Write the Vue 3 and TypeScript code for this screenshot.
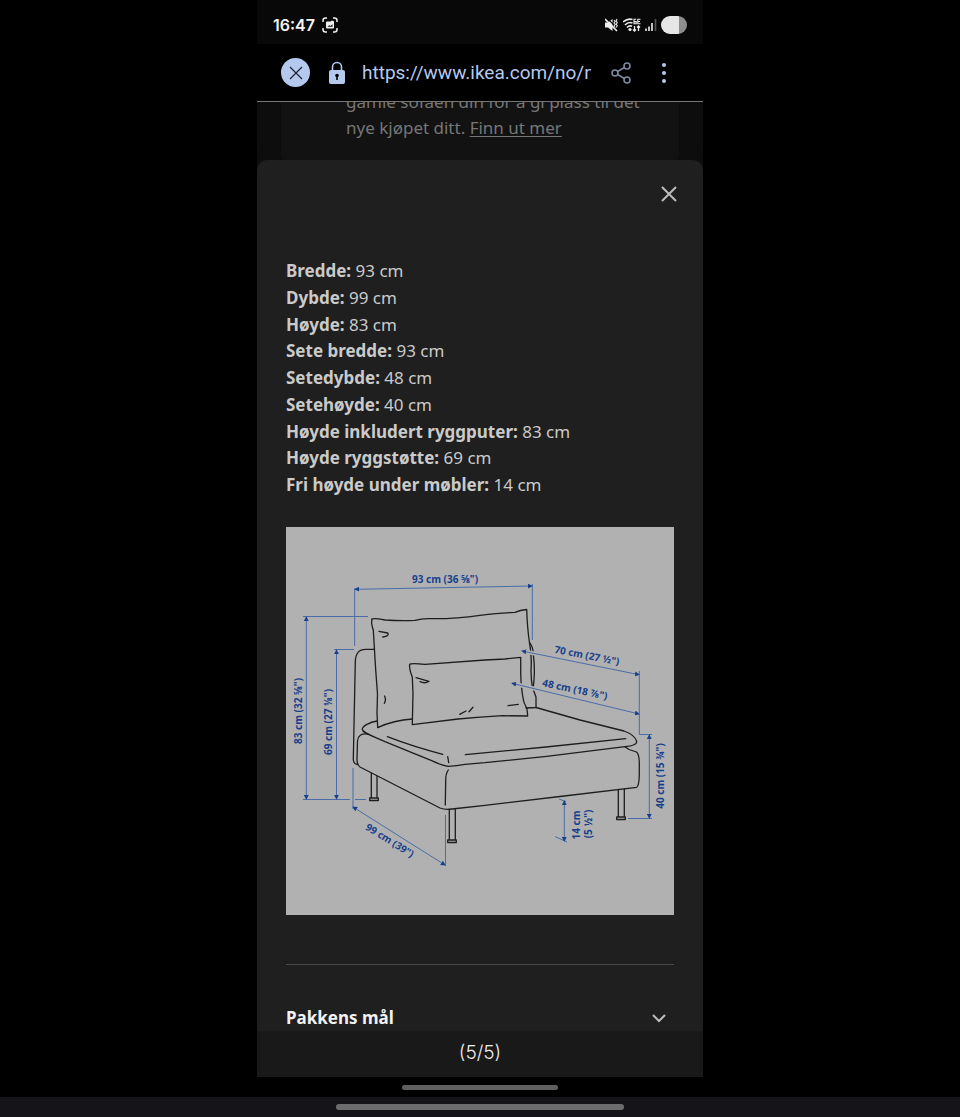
<script setup lang="ts">
import { ref } from 'vue'

interface Measure {
  label: string
  value: string
}

interface DimensionLabel {
  text: string
  x: number
  y: number
  angle: number
}

const address = ref('https://www.ikea.com/no/no/p/')

const measures: Measure[] = [
  { label: 'Bredde:', value: '93 cm' },
  { label: 'Dybde:', value: '99 cm' },
  { label: 'Høyde:', value: '83 cm' },
  { label: 'Sete bredde:', value: '93 cm' },
  { label: 'Setedybde:', value: '48 cm' },
  { label: 'Setehøyde:', value: '40 cm' },
  { label: 'Høyde inkludert ryggputer:', value: '83 cm' },
  { label: 'Høyde ryggstøtte:', value: '69 cm' },
  { label: 'Fri høyde under møbler:', value: '14 cm' },
]

const dimensionLabels: DimensionLabel[] = [
  { text: '93 cm (36 ⅝")', x: 445, y: 579, angle: 0 },
  { text: '83 cm (32 ⅝")', x: 298, y: 711, angle: -90 },
  { text: '69 cm (27 ⅛")', x: 328, y: 722, angle: -90 },
  { text: '70 cm (27 ½")', x: 587, y: 655, angle: 11 },
  { text: '48 cm (18 ⅞")', x: 575, y: 689, angle: 12 },
  { text: '99 cm (39")', x: 390, y: 840, angle: 32 },
  { text: '40 cm (15 ¾")', x: 660, y: 776, angle: -90 },
  { text: '14 cm', x: 576, y: 825, angle: -90 },
  { text: '(5 ½")', x: 588, y: 824, angle: -90 },
]

const dimensionLines: string[] = [
  'M355 589.300L532 586',
  'M306.300 617V799',
  'M336.500 650V799',
  'M353 807L445 865',
  'M522 651L639 674.700',
  'M512 683.300L639 714',
  'M649.300 735V818',
  'M564.300 801V841',
]
</script>

<template>
  <div class="screen">
    <main class="phone">
      <header class="status">
        <span class="time">16:47</span>
        <svg class="capture" viewBox="0 0 16 16" width="16" height="16" aria-hidden="true">
          <path d="M1 5V3.500Q1 1 3.500 1H5M11 1h1.500Q15 1 15 3.500V5M15 11v1.500Q15 15 12.500 15H11M5 15H3.500Q1 15 1 12.500V11" fill="none" stroke="#eee" stroke-width="1.500" />
          <path d="M4 5.500Q4 4.500 5 4.500H8.500L9.500 3.800H11Q12 3.800 12 5V10.500Q12 11.500 11 11.500H5Q4 11.500 4 10.500z" fill="#eee" />
          <path d="M5.500 9.800l1.800-1.600 1.200.8 2-1.800v2.600z" fill="#080808" />
        </svg>
        <div class="indicators">
          <svg viewBox="0 0 14 14" width="14" height="14" aria-hidden="true">
            <path d="M0 4.500h3L7.500 1v12L3 9.500H0z" fill="#eee" />
            <path d="M2 0l12 12" stroke="#080808" stroke-width="1.200" />
            <path d="M0 1l12 12" stroke="#eee" stroke-width="1.600" />
            <path d="M9 2l1.200 1.500L9 5l1.200 1.500L9 8l1.200 1.500M12 1l-.8 1.700 1 1.700-1 1.700 1 1.700-1 1.700" fill="none" stroke="#ddd" stroke-width="1.200" />
          </svg>
          <svg viewBox="0 0 18 14" width="18" height="14" aria-hidden="true">
            <path d="M0 4Q4.500 0 9.500 1.500M2 7Q5.500 3.500 9.500 5M4 9.500Q6.500 7 9 8.300" fill="none" stroke="#eee" stroke-width="1.600" />
            <circle cx="7" cy="11.500" r="1.600" fill="#eee" />
            <path d="M13.200 1.300h-2.200v4.500h2.200v-2.200h-2M17.500 1.300h-2.700v4.500h2.700M14.800 3.500h2.200" fill="none" stroke="#eee" stroke-width="1.100" />
            <path d="M11.500 8v5M10 11.500l1.500 1.500 1.500-1.500M15.500 13V8M14 9.500L15.500 8 17 9.500" fill="none" stroke="#eee" stroke-width="1.300" />
          </svg>
          <svg viewBox="0 0 12 12" width="12" height="12" aria-hidden="true">
            <path d="M1 9.500V12M4 7.500V12M7 4V12" stroke="#eee" stroke-width="1.600" />
            <path d="M10.500 0V12" stroke="#555" stroke-width="1.600" />
          </svg>
          <span class="battery"></span>
        </div>
      </header>

      <nav class="toolbar" aria-label="Nettleser">
        <button class="stop" type="button" aria-label="Stopp">
          <svg viewBox="0 0 14 14" width="14" height="14"><path d="M1 1l12 12M13 1L1 13" stroke="#1c2433" stroke-width="1.200" /></svg>
        </button>
        <button class="lock" type="button" aria-label="Sikker tilkobling">
          <svg viewBox="0 0 18 24" width="18" height="24">
            <path d="M4.500 10V6a4.500 4.500 0 0 1 9 0v4" fill="none" stroke="#b5c9ef" stroke-width="1.600" />
            <rect x="1" y="9" width="16" height="14" rx="2" fill="#b5c9ef" />
            <circle cx="9" cy="14.500" r="1.800" fill="#000" />
            <path d="M9 15v4" stroke="#000" stroke-width="1.600" />
          </svg>
        </button>
        <input v-model="address" class="address" type="text" aria-label="Adresse" />
        <button class="share" type="button" aria-label="Del">
          <svg viewBox="0 0 20 22" width="20" height="22">
            <g fill="none" stroke="#7d879e" stroke-width="1.600">
              <circle cx="4" cy="11" r="3" />
              <circle cx="16" cy="4" r="3" />
              <circle cx="16" cy="18" r="3" />
              <path d="M6.600 9.500l6.800-4M6.600 12.500l6.800 4" />
            </g>
          </svg>
        </button>
        <button class="more" type="button" aria-label="Mer">
          <svg viewBox="0 0 4 20" width="4" height="20" fill="#b5c9ef">
            <circle cx="2" cy="2" r="2" /><circle cx="2" cy="10" r="2" /><circle cx="2" cy="18" r="2" />
          </svg>
        </button>
      </nav>

      <section class="backdrop">
        <div class="card">
          <p>gamle sofaen din for å gi plass til det<br />nye kjøpet ditt. <a href="#">Finn ut mer</a></p>
        </div>
      </section>

      <section class="sheet" role="dialog" aria-label="Mål">
        <div class="sheet-head">
          <button type="button" aria-label="Lukk">
            <svg viewBox="0 0 16 16" width="16" height="16"><path d="M1 1l14 14M15 1L1 15" stroke="#bdbdbd" stroke-width="2" /></svg>
          </button>
        </div>

        <dl class="measures">
          <div v-for="m in measures" :key="m.label">
            <dt>{{ m.label }}</dt>
            {{ ' ' }}
            <dd>{{ m.value }}</dd>
          </div>
        </dl>

        <svg class="drawing" viewBox="286 527 388 388" role="img" aria-label="Måltegning">
          <defs>
            <marker id="arrow" viewBox="0 0 6 6" refX="5" refY="3" markerWidth="5" markerHeight="5" markerUnits="userSpaceOnUse" orient="auto-start-reverse">
              <path d="M0 0L6 3L0 6z" fill="#17418c" />
            </marker>
          </defs>

          <g class="ink">
            <path d="M374 649.300H366Q355.500 649 355.300 662L353.300 759Q353.200 764 357.500 764.500" />
            <path d="M372 619C370.500 624 372 626 373.300 630L374.300 647L375.700 670L377.500 694L377 713L377.700 727.700Q394 720 412.300 719" />
            <path d="M372 619Q374 618 385 620Q402 621 415 620.300Q423 618 432 618.700Q455 619 480 615.300Q500 613 515 612.300Q520 610 526.700 609.500Q527.300 628 529.500 643Q532 655 531 670Q531 680 532.500 688" />
            <path d="M530 643Q533.500 648 533.500 656Q535.500 672 533 689L536 697V707.500L526 708" />
            <path d="M379 631.300L387.700 633Q390 636 382.700 637M384.500 696Q386.500 700 384.300 703.300" />
            <path d="M409.700 664.300Q411 663 425 664.300L485 660L505 659L520.700 657.300V673Q520.700 685 522.500 695Q523 702 527 709L527.700 716L503 715.700Q480 717 458 719L412.300 724.700L413 693L412.300 677Q409 669 409.700 664.300" />
            <path d="M416 677.700L429 681.300Q425 684 420 681.700M459.700 714.300L466 711M469 711.700L473 707.300M508 705.700L518.300 704.300" />
            <path d="M377 721C370 722 362 726 362.300 729.500C363 733 370 735 385 741.700Q410 752 431.700 760.700Q443 766 448.300 766.300Q457 766 465 764.300L485 762.700L546.700 756.300L625 746.700Q637 745.500 636.700 741.500Q635 735 624 731L580 720L536 707.500" />
            <path d="M387.300 736.700Q414 747 442.700 754.300M465.300 754.700L546 747L625.700 738.700M447.700 756.700L448.700 762.700" />
            <path d="M367.700 734Q358 733 357.500 741L357 759Q357 765 360 767L440 808Q445 810 452 809L485 805.300L560 796.500L636.700 787.300Q639 786 639.300 775V762Q639 754 636.500 752L629 749.500L625 746.700" />
            <path d="M448.300 770Q445.500 774 445.700 780L445.300 805" />
            <path d="M371.300 773.500V798M377 776.500V798M369.700 798H378.300V800.500H369.700z" />
            <path d="M449.300 809.500V840M455.300 809V840M447.700 840H456.300V842.500H447.700z" />
            <path d="M618.300 789.500V817M624.300 789V817M616.700 817H625.300V819.500H616.700z" />
          </g>

          <path class="gap" d="M522 651L639 674.700M512 683.300L639 714" />

          <g class="guide">
            <path d="M354.700 588V646M532.300 584V640M303 616.500H368M303 799.500H350M355 799.500H366M334 649.500H354M353 768V809M445.500 815V866M639.300 671V734.500H652M628 818.500H652M559 799L566 801.500M555 836.500L567 842" />
            <path v-for="line in dimensionLines" :key="line" :d="line" marker-start="url(#arrow)" marker-end="url(#arrow)" />
          </g>

          <text
            v-for="d in dimensionLabels"
            :key="d.text"
            class="dimension"
            :transform="`translate(${d.x} ${d.y}) rotate(${d.angle})`"
            dy="4"
          >{{ d.text }}</text>
        </svg>

        <hr />

        <button class="accordion" type="button" aria-expanded="false">
          <span>Pakkens mål</span>
          <svg viewBox="0 0 14 9" width="14" height="9" aria-hidden="true"><path d="M1 1l6 6 6-6" fill="none" stroke="#bdbdbd" stroke-width="2" /></svg>
        </button>
      </section>

      <footer class="counter">(5/5)</footer>
      <div class="inner-handle"><span></span></div>
    </main>
    <div class="outer-handle"><span></span></div>
  </div>
</template>

<style>
body {
  margin: 0;
  background: #000;
}
</style>

<style scoped>
.screen {
  display: flex;
  flex-direction: column;
  min-height: 100vh;
  background: #000;
  font-family: "Noto Sans", sans-serif;
  font-size: 17px;
  line-height: 26px;
}

button {
  display: flex;
  align-items: center;
  justify-content: center;
  padding: 0;
  border: 0;
  background: none;
  color: inherit;
  font: inherit;
}

svg {
  display: block;
  flex: none;
}

.phone {
  width: 100%;
  max-width: 446px;
  margin: 0 auto;
}

.status {
  display: flex;
  align-items: center;
  gap: 7px;
  height: 44px;
  padding: 5px 16px 0;
  box-sizing: border-box;
  background: #080808;
  color: #f4f4f4;
}

.time {
  font: 600 16px/24px Inter, sans-serif;
}

.indicators {
  display: flex;
  align-items: center;
  gap: 4px;
  margin-left: auto;
}

.battery {
  width: 26px;
  height: 18px;
  border-radius: 9px;
  background: linear-gradient(to right, #e6e6e6 70%, #8d8d8d 70%);
}

.toolbar {
  display: flex;
  align-items: center;
  height: 57px;
  padding: 0 37px 0 24px;
  border-bottom: 1px solid #777;
  background: #000;
}

.stop {
  flex: none;
  width: 29px;
  height: 29px;
  border-radius: 50%;
  background: #b5c9ef;
}

.lock {
  margin: 0 16px 0 18px;
}

.address {
  flex: 1;
  min-width: 0;
  padding: 0;
  border: 0;
  outline: 0;
  background: none;
  color: #b5c9ef;
  font: 400 19px/28px Roboto, sans-serif;
}

.share {
  margin: 0 31px 0 20px;
}

.backdrop {
  display: flex;
  align-items: flex-end;
  height: 58px;
  padding: 0 24px;
  overflow: hidden;
  background: #0d0d0d;
}

.card {
  flex: 1;
  padding: 0 24px 19px 65px;
  border-radius: 0 0 6px 6px;
  background: #121212;
  color: #767676;
}

.card p {
  margin: 0;
  white-space: nowrap;
}

.card a {
  color: inherit;
  text-underline-offset: 2px;
}

.sheet {
  padding: 0 29px;
  border-radius: 10px 10px 0 0;
  background: #1f1f1f;
  box-shadow: 0 -10px 0 #0d0d0d;
  color: #cacaca;
}

.sheet-head {
  display: flex;
  justify-content: flex-end;
  padding: 22px 0 52px;
}

.sheet-head button {
  width: 24px;
  height: 24px;
  margin-right: -7px;
}

.measures {
  display: grid;
  align-content: space-between;
  min-height: 240px;
  margin: 0;
}

.measures dt,
.measures dd {
  display: inline;
  margin: 0;
}

.measures dt {
  font-weight: 700;
}

.drawing {
  width: 100%;
  height: auto;
  margin-top: 29px;
  background: #b1b1b1;
}

.ink {
  fill: none;
  stroke: #1d1d1d;
  stroke-width: 1.3;
  stroke-linejoin: round;
  stroke-linecap: round;
}

.gap {
  fill: none;
  stroke: #b1b1b1;
  stroke-width: 4;
}

.guide {
  fill: none;
  stroke: #4a6da8;
  stroke-width: 1;
}

.dimension {
  fill: #17418c;
  font-size: 10px;
  font-weight: 700;
  text-anchor: middle;
}

hr {
  height: 1px;
  margin: 49px 0 0;
  border: 0;
  background: #4a4a4a;
}

.accordion {
  justify-content: space-between;
  width: 100%;
  padding: 40px 8px 0 0;
  color: #f2f2f2;
  font-weight: 700;
}

.counter {
  padding: 8px 0 10px;
  background: #191919;
  color: #eee;
  font: 300 19px/28px Inter, sans-serif;
  text-align: center;
}

.inner-handle,
.outer-handle {
  display: flex;
  align-items: center;
  justify-content: center;
  height: 20px;
}

.inner-handle span {
  width: 35%;
  height: 5px;
  border-radius: 3px;
  background: #5f5f5f;
}

.outer-handle {
  flex: 1;
  background: #151519;
}

.outer-handle span {
  width: 30%;
  height: 6px;
  border-radius: 3px;
  background: #6c6c6e;
}
</style>
